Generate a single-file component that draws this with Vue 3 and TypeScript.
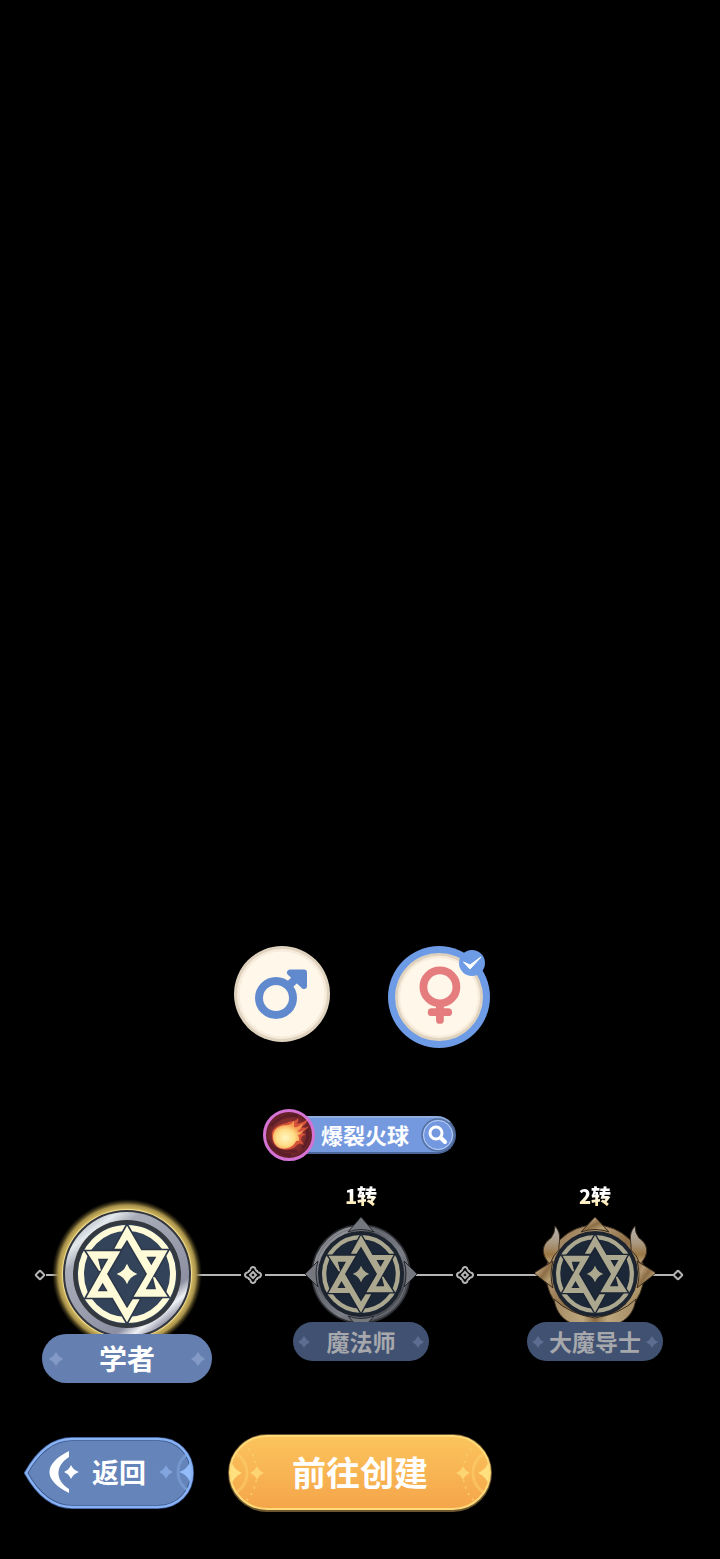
<script setup lang="ts">
import { ref } from 'vue'

type Gender = 'male' | 'female'
type Tier = 'base' | 'silver' | 'gold'

interface Career {
  name: string
  tier: Tier
  grade: string
}

const gender = ref<Gender>('female')
const current = ref('学者')

const careers: Career[] = [
  { name: '学者', tier: 'base', grade: '' },
  { name: '魔法师', tier: 'silver', grade: '1转' },
  { name: '大魔导士', tier: 'gold', grade: '2转' },
]

const zPiece =
  'M-122 -68H-20L-60 0L0 103L17 76H38L0 145L-43 71H-122L-56 -46H-87L-78 -10H-84ZM-88 52H-58L-73 26Z'
const sparkle = 'M0 -31Q8 -8 31 0Q8 8 0 31Q-8 8 -31 0Q-8 -8 0 -31Z'
const star = 'M0 -6Q2 -2 6 0Q2 2 0 6Q-2 2 -6 0Q-2 -2 0 -6Z'
const petal =
  'M-2 -7Q0 -9 2 -7Q3 -4 4 -4Q4 -3 7 -2Q9 0 7 2Q4 3 4 4Q3 4 2 7Q0 9 -2 7Q-3 4 -4 4Q-4 3 -7 2Q-9 0 -7 -2Q-4 -3 -4 -4Q-3 -4 -2 -7Z'
</script>

<template>
  <main class="screen">
    <div class="genders" role="radiogroup" aria-label="性别">
      <label class="gender" :class="{ on: gender === 'male' }">
        <input v-model="gender" type="radio" name="gender" value="male" aria-label="男" />
        <svg viewBox="0 0 96 96" aria-hidden="true">
          <circle cx="48" cy="48" r="48" fill="#dfd2be" />
          <circle cx="48" cy="48" r="45" fill="#f7ebdc" />
          <circle cx="48" cy="48" r="42.500" fill="#fff7ea" />
          <g fill="none" stroke="#618ace" stroke-width="8">
            <circle cx="42" cy="52" r="17" />
            <path d="M53 41L66 29" />
            <path d="M56 26.500H70V40Z" fill="#618ace" stroke-width="6" stroke-linejoin="round" />
          </g>
        </svg>
        <svg v-if="gender === 'male'" class="tick" viewBox="0 0 26 26" aria-hidden="true">
          <circle cx="13" cy="13" r="13" fill="#6e9be6" />
          <path d="M4.500 12L11 19L22 7L11 15Z" fill="#fff" stroke="#fff" />
        </svg>
      </label>
      <label class="gender" :class="{ on: gender === 'female' }">
        <input v-model="gender" type="radio" name="gender" value="female" aria-label="女" />
        <svg viewBox="0 0 96 96" aria-hidden="true">
          <circle cx="48" cy="48" r="48" fill="#dfd2be" />
          <circle cx="48" cy="48" r="45" fill="#f7ebdc" />
          <circle cx="48" cy="48" r="42.500" fill="#fff7ea" />
          <g fill="none" stroke="#e57c7e" stroke-width="8.500" stroke-linecap="round">
            <circle cx="49" cy="37" r="18" />
            <path d="M49 57V73M40 64.500H58" />
          </g>
        </svg>
        <svg v-if="gender === 'female'" class="tick" viewBox="0 0 26 26" aria-hidden="true">
          <circle cx="13" cy="13" r="13" fill="#6e9be6" />
          <path d="M4.500 12L11 19L22 7L11 15Z" fill="#fff" stroke="#fff" />
        </svg>
      </label>
    </div>

    <button type="button" class="skill">
      <svg class="fireball" viewBox="0 0 52 52" aria-hidden="true">
        <defs>
          <radialGradient id="ember">
            <stop offset="0" stop-color="#a8402f" />
            <stop offset=".7" stop-color="#7c2a2d" />
            <stop offset="1" stop-color="#5a1c26" />
          </radialGradient>
          <radialGradient id="flame" cx=".4" cy=".6">
            <stop offset="0" stop-color="#fff6c0" />
            <stop offset=".6" stop-color="#ffdc85" />
            <stop offset="1" stop-color="#f59a51" />
          </radialGradient>
        </defs>
        <circle cx="26" cy="26" r="24.500" fill="url(#ember)" />
        <path d="M8 17Q20 4 35 7M5 31Q12 45 28 46M43 18Q48 30 39 39M10 38Q20 43 34 42" fill="none" stroke="#4b1824" stroke-width="3" opacity=".55" />
        <path d="M9 27C8 18 18 15 24 14C26 11 32 14 35 9Q36 13 33 15Q40 14 45 10Q43 16 38 18Q42 20 46 17Q43 22 38 23L43 26Q38 26 38 31L41 36Q37 33 34 36C29 42 19 42 14 38Q9 34 9 27Z" fill="#d65238" />
        <path d="M10 28C10 19 17 16 25 16Q29 15 31 12Q31 17 31 18Q35 19 40 14Q38 21 34 22Q37 24 41 21Q38 26 35 26Q37 29 36 32Q33 31 32 34C28 40 20 41 15 38Q10 34 10 28Z" fill="url(#flame)" />
        <circle cx="26" cy="26" r="24.500" fill="none" stroke="#d473d4" stroke-width="3" />
      </svg>
      <span class="skill-name">爆裂火球</span>
      <svg class="lens" viewBox="0 0 34 34" aria-hidden="true">
        <circle cx="17" cy="17" r="16" fill="#7498df" stroke="#56729f" stroke-width="1.500" />
        <circle cx="17" cy="17" r="14.500" fill="none" stroke="#bcd0f6" />
        <circle cx="15" cy="15" r="6" fill="none" stroke="#fff" stroke-width="3" />
        <path d="M20 20L24 24" stroke="#fff" stroke-width="4" stroke-linecap="round" />
      </svg>
    </button>

    <section class="path">
      <div class="track" aria-hidden="true">
        <svg class="node" viewBox="-9 -9 18 18">
          <path d="M-1 -3.500Q0 -5 1 -3.500L3.500 -1Q5 0 3.500 1L1 3.500Q0 5 -1 3.500L-3.500 1Q-5 0 -3.500 -1Z" fill="none" stroke="#b5b5b5" stroke-width="2" />
          <path d="M6 0H13" stroke="#b5b5b5" stroke-width="2" />
        </svg>
        <i class="rail"></i>
        <svg class="node" viewBox="-9 -9 18 18">
          <path :d="petal" fill="none" stroke="#b5b5b5" stroke-width="2" />
          <path d="M0 -3L3 0L0 3L-3 0Z" fill="none" stroke="#b5b5b5" stroke-width="2" />
        </svg>
        <i class="rail"></i>
        <svg class="node" viewBox="-9 -9 18 18">
          <path :d="petal" fill="none" stroke="#b5b5b5" stroke-width="2" />
          <path d="M0 -3L3 0L0 3L-3 0Z" fill="none" stroke="#b5b5b5" stroke-width="2" />
        </svg>
        <i class="rail"></i>
        <svg class="node" viewBox="-9 -9 18 18">
          <path d="M-1 -3.500Q0 -5 1 -3.500L3.500 -1Q5 0 3.500 1L1 3.500Q0 5 -1 3.500L-3.500 1Q-5 0 -3.500 -1Z" fill="none" stroke="#b5b5b5" stroke-width="2" />
          <path d="M-13 0H-5" stroke="#b5b5b5" stroke-width="2" />
        </svg>
      </div>

      <div class="careers">
        <button
          v-for="career in careers"
          :key="career.name"
          type="button"
          class="career"
          :class="career.tier"
          :aria-pressed="current === career.name"
          @click="current = career.name"
        >
          <span v-if="career.grade" class="grade">{{ career.grade }}</span>

          <svg v-if="career.tier === 'base'" class="emblem" viewBox="-75 -75 150 150" aria-hidden="true">
            <defs>
              <radialGradient id="halo">
                <stop offset=".84" stop-color="#e9ce6e" />
                <stop offset=".92" stop-color="#a58f49" />
                <stop offset="1" stop-color="#4a3f1c" stop-opacity="0" />
              </radialGradient>
              <linearGradient id="steel" x1=".15" y1=".05" x2=".85" y2=".95">
                <stop offset="0" stop-color="#a5a9b5" />
                <stop offset=".12" stop-color="#e4e9ed" />
                <stop offset=".22" stop-color="#a9adb9" />
                <stop offset=".78" stop-color="#8d90a2" />
                <stop offset=".86" stop-color="#f0f2f6" />
                <stop offset=".93" stop-color="#9799aa" />
              </linearGradient>
            </defs>
            <circle r="75" fill="url(#halo)" />
            <circle r="65" fill="#f2df96" />
            <circle r="63" fill="url(#steel)" stroke="#34363e" stroke-width="2" />
            <circle r="54" fill="#34383f" />
            <circle r="50" fill="#33435a" />
            <g transform="scale(.3333)" fill="#fffbd8" fill-rule="evenodd" stroke="#2d394a" stroke-width="10" paint-order="stroke">
              <circle r="138" fill="none" stroke="#fffbd8" stroke-width="18" paint-order="normal" />
              <path :d="zPiece" />
              <path :d="zPiece" transform="rotate(180)" />
              <path :d="sparkle" stroke="none" />
            </g>
          </svg>

          <svg v-else-if="career.tier === 'silver'" class="emblem" viewBox="-60 -60 120 120" aria-hidden="true">
            <defs>
              <linearGradient id="silver" x1="0" y1="0" x2="1" y2="1">
                <stop offset="0" stop-color="#4f5259" />
                <stop offset=".2" stop-color="#8f9196" />
                <stop offset=".35" stop-color="#5b5e66" />
                <stop offset=".6" stop-color="#7e8189" />
                <stop offset=".8" stop-color="#4a4c54" />
                <stop offset="1" stop-color="#8f9196" />
              </linearGradient>
            </defs>
            <circle r="49" fill="url(#silver)" stroke="#2b2d32" stroke-width="1.500" />
            <circle r="46" fill="none" stroke="#74767d" />
            <g fill="#75777f" stroke="#26282e">
              <path d="M0 -57L13 -42Q0 -47 -13 -42Z" />
              <path d="M56 0L43 13Q47 0 43 -13Z" />
              <path d="M-56 0L-43 13Q-47 0 -43 -13Z" />
              <path d="M0 57L13 42Q0 47 -13 42Z" />
            </g>
            <circle r="43" fill="#1d242e" />
            <circle r="40" fill="#1c2737" />
            <g transform="scale(.267)" fill="#aca88f" fill-rule="evenodd" stroke="#1b2432" stroke-width="10" paint-order="stroke">
              <circle r="138" fill="none" stroke="#aca88f" stroke-width="16" paint-order="normal" />
              <path :d="zPiece" />
              <path :d="zPiece" transform="rotate(180)" />
              <path :d="sparkle" stroke="none" />
            </g>
          </svg>

          <svg v-else class="emblem" viewBox="-60 -60 120 120" aria-hidden="true">
            <defs>
              <linearGradient id="gold" x1="0" y1="0" x2="1" y2="1">
                <stop offset="0" stop-color="#8a6c48" />
                <stop offset=".3" stop-color="#b39873" />
                <stop offset=".5" stop-color="#8c6d45" />
                <stop offset=".75" stop-color="#b8a075" />
                <stop offset="1" stop-color="#8a6b40" />
              </linearGradient>
              <linearGradient id="leaf" x1="0" y1="0" x2="0" y2="1">
                <stop offset="0" stop-color="#b4b2b4" />
                <stop offset=".45" stop-color="#aa9880" />
                <stop offset=".75" stop-color="#9a7744" />
                <stop offset="1" stop-color="#bba47d" />
              </linearGradient>
              <linearGradient id="wreath">
                <stop offset="0" stop-color="#a58c66" />
                <stop offset=".35" stop-color="#bda67c" />
                <stop offset=".5" stop-color="#8d6c42" />
                <stop offset=".65" stop-color="#bda67c" />
                <stop offset="1" stop-color="#a58c66" />
              </linearGradient>
            </defs>
            <circle r="49" fill="url(#gold)" stroke="#3b2d1d" />
            <g fill="url(#leaf)" stroke="#3b2d1d">
              <path d="M-40 -48C-32 -39 -37 -31 -36 -24Q-42 -19 -45 -10C-55 -20 -53 -30 -44 -36Q-40 -41 -40 -48Z" />
              <path d="M40 -48C32 -39 37 -31 36 -24Q42 -19 45 -10C55 -20 53 -30 44 -36Q40 -41 40 -48Z" />
            </g>
            <path d="M-41 25Q-26 40 0 44Q26 40 41 25C38 45 24 53 0 54C-24 53 -38 45 -41 25Z" fill="url(#wreath)" stroke="#3b2d1d" />
            <g fill="url(#gold)" stroke="#3b2d1d">
              <path d="M0 -57L14 -42Q0 -47 -14 -42Z" />
              <path d="M61 -1L42 14Q46 0 42 -13Z" />
              <path d="M-61 -1L-42 14Q-46 0 -42 -13Z" />
            </g>
            <circle r="43" fill="#1d242e" />
            <circle r="40" fill="#1c2737" />
            <g transform="scale(.267)" fill="#aca88f" fill-rule="evenodd" stroke="#1b2432" stroke-width="10" paint-order="stroke">
              <circle r="138" fill="none" stroke="#aca88f" stroke-width="16" paint-order="normal" />
              <path :d="zPiece" />
              <path :d="zPiece" transform="rotate(180)" />
              <path :d="sparkle" stroke="none" />
            </g>
          </svg>

          <span class="plate">
            <svg viewBox="-6 -6 12 12" aria-hidden="true"><path :d="star" /></svg>
            <span>{{ career.name }}</span>
            <svg viewBox="-6 -6 12 12" aria-hidden="true"><path :d="star" /></svg>
          </span>
        </button>
      </div>
    </section>

    <nav class="actions">
      <button type="button" class="action back">
        <svg viewBox="0 0 170 74" aria-hidden="true">
          <defs>
            <clipPath id="back-shape">
              <path d="M2 37C12 19 27 3 48 3H134C154 3 168 18 168 37S154 71 134 71H48C27 71 12 55 2 37Z" />
            </clipPath>
          </defs>
          <path d="M2 37C12 19 27 3 48 3H134C154 3 168 18 168 37S154 71 134 71H48C27 71 12 55 2 37Z" fill="#6484ba" stroke="#38558a" stroke-width="4" />
          <g clip-path="url(#back-shape)">
            <circle cx="176" cy="36" r="22" fill="none" stroke="#7496ce" stroke-width="3" />
            <path d="M168 18Q166 33 155 36Q166 39 168 54Z" fill="#93bcfb" />
            <path d="M142 29Q144 34 149 36Q144 38 142 43Q140 38 135 36Q140 34 142 29Z" fill="#83a5dd" />
          </g>
          <path d="M2 37C12 19 27 3 48 3H134C154 3 168 18 168 37S154 71 134 71H48C27 71 12 55 2 37Z" fill="none" stroke="#89b2f5" stroke-width="2.500" />
          <path d="M45 15V21C31 30 31 44 45 53V57C19 44 19 28 45 15Z" fill="#fff" />
          <path d="M47 29Q49 34 55 36Q49 38 47 43Q45 38 40 36Q45 34 47 29Z" fill="#fff" />
        </svg>
        <span>返回</span>
      </button>
      <button type="button" class="action create">
        <svg viewBox="0 0 264 78" aria-hidden="true">
          <defs>
            <linearGradient id="amber" x1="0" y1="0" x2="0" y2="1">
              <stop offset="0" stop-color="#fbc45c" />
              <stop offset="1" stop-color="#f5a54a" />
            </linearGradient>
            <clipPath id="create-shape"><rect x="2" y="2" width="260" height="73" rx="37" /></clipPath>
            <g id="dial">
              <circle cx="-4" cy="39" r="23" fill="none" stroke="#fbcd6a" stroke-width="3" opacity=".6" />
              <circle cx="-12" cy="39" r="41" fill="none" stroke="#fdd371" stroke-width="2" stroke-dasharray="2 5" opacity=".7" />
              <path d="M1 21Q4 35 14 39Q4 43 1 57Z" fill="#ffe07f" />
              <path d="M29 32Q31 37 36 39Q31 41 29 46Q27 41 22 39Q27 37 29 32Z" fill="#fdd472" />
            </g>
          </defs>
          <rect width="264" height="78" rx="39" fill="#6d552f" />
          <rect x="2" y="2" width="260" height="73" rx="37" fill="url(#amber)" />
          <g clip-path="url(#create-shape)">
            <use href="#dial" />
            <use href="#dial" transform="translate(264 0) scale(-1 1)" />
          </g>
          <rect x="2" y="2" width="260" height="73" rx="37" fill="none" stroke="#ffda79" stroke-width="2" />
        </svg>
        <span>前往创建</span>
      </button>
    </nav>
  </main>
</template>

<style>
body {
  margin: 0;
  background: #000;
}
</style>

<style scoped>
.screen {
  box-sizing: border-box;
  min-height: 100vh;
  padding-bottom: 47px;
  display: flex;
  flex-direction: column;
  justify-content: flex-end;
  background: #000;
  color: #fff;
  font-family: 'Noto Sans CJK SC', sans-serif;
  font-weight: 700;
}
button {
  padding: 0;
  border: 0;
  background: none;
  color: inherit;
  font: inherit;
  cursor: pointer;
}
svg {
  display: block;
}

.genders {
  display: flex;
  justify-content: center;
  align-items: flex-start;
  gap: 58px;
  padding-left: 4px;
  margin-bottom: 61px;
}
.gender {
  position: relative;
  box-sizing: border-box;
  width: 96px;
  height: 96px;
  border-radius: 50%;
  cursor: pointer;
}
.gender.on {
  width: 102px;
  height: 102px;
  padding: 7px;
  background: #6e9be6;
}
.gender input {
  position: absolute;
  inset: 0;
  margin: 0;
  width: 100%;
  height: 100%;
  opacity: 0;
}
.gender .tick {
  position: absolute;
  top: 4px;
  right: 5px;
  width: 26px;
}

.skill {
  align-self: center;
  display: flex;
  align-items: center;
  height: 52px;
  margin-right: 2px;
  margin-bottom: 21px;
}
.fireball {
  position: relative;
  width: 52px;
  height: 52px;
}
.skill-name {
  box-sizing: border-box;
  height: 38px;
  margin-left: -12px;
  padding: 0 45px 0 18px;
  border: 2px solid #4c679b;
  border-top-color: #92aee0;
  border-left: 0;
  border-radius: 0 19px 19px 0;
  background: #7599df;
  font-size: 22px;
  line-height: 32px;
}
.lens {
  width: 34px;
  height: 34px;
  margin-left: -35px;
}

.path {
  display: grid;
  margin-bottom: 51px;
}
.track,
.careers {
  grid-area: 1 / 1;
}
.track {
  display: flex;
  align-items: center;
  align-self: start;
  height: 18px;
  margin-top: 84px;
  padding: 0 33px 0 31px;
}
.node {
  width: 18px;
  height: 18px;
  overflow: visible;
}
.rail {
  flex: 1;
  height: 2px;
  margin: 0 3px;
  background: #b5b5b5;
}
.careers {
  position: relative;
  display: grid;
  grid-template-columns: repeat(3, 1fr);
  padding: 0 8px 0 10px;
}
.career {
  display: flex;
  flex-direction: column;
  align-items: center;
}
.grade {
  height: 32px;
  font-size: 20px;
  font-weight: 900;
  line-height: 28px;
  background: linear-gradient(#fff 40%, #ffe9a6 75%);
  background-clip: text;
  color: transparent;
}
.emblem {
  width: 120px;
  height: 120px;
}
.base .emblem {
  width: 150px;
  height: 150px;
  margin-top: 17px;
}
.plate {
  position: relative;
  box-sizing: border-box;
  display: flex;
  align-items: center;
  justify-content: space-between;
  width: 136px;
  height: 39px;
  margin-top: -12px;
  padding: 0 5px;
  border-radius: 20px;
  background: #405172;
  color: #a7a8ac;
  font-size: 23px;
  line-height: 39px;
  white-space: nowrap;
}
.plate svg {
  width: 12px;
  fill: #5b6d90;
}
.base .plate {
  width: 170px;
  height: 49px;
  margin-top: -15px;
  padding: 0 7px;
  border-radius: 25px;
  background: #6580b0;
  color: #fff;
  font-size: 28px;
  line-height: 49px;
}
.base .plate svg {
  width: 14px;
  fill: #8399c6;
}

.actions {
  display: flex;
  align-items: center;
  gap: 34px;
  padding-left: 24px;
}
.action {
  display: grid;
  align-items: center;
  justify-items: center;
}
.action > * {
  grid-area: 1 / 1;
}
.action span {
  position: relative;
  padding-bottom: 3px;
}
.back svg {
  width: 170px;
}
.back span {
  padding-left: 20px;
  font-size: 27px;
  line-height: 40px;
}
.create svg {
  width: 264px;
}
.create span {
  font-size: 34px;
  line-height: 50px;
}
</style>
